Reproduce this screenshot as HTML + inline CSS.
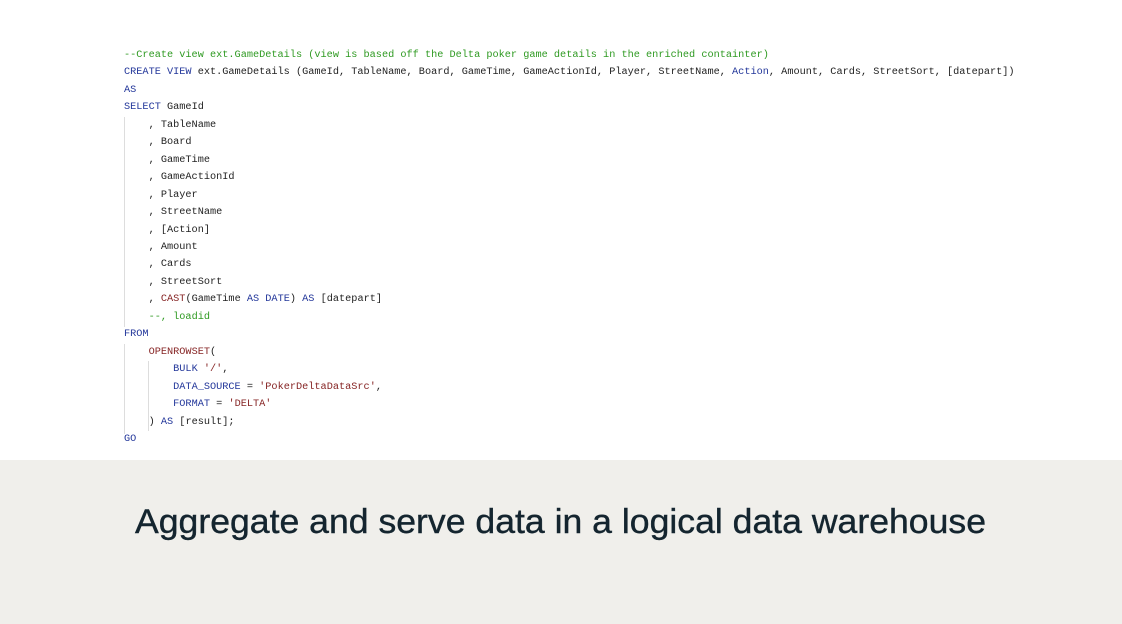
<!DOCTYPE html>
<html><head><meta charset="utf-8"><style>
html,body{margin:0;padding:0;width:1122px;height:624px;overflow:hidden;background:#fff;}
.top{position:absolute;left:0;top:0;width:1122px;height:460px;background:#fff;}
.bot{position:absolute;left:0;top:460px;width:1122px;height:164px;background:#f0efeb;}
pre{position:absolute;left:124px;top:47px;margin:0;font-family:"Liberation Mono",monospace;font-size:10.24px;line-height:17.45px;color:#222;transform:scaleY(1.1);transform-origin:0 0;}
.k{color:#22369a}.c{color:#2f9a22}.s{color:#862424}.f{color:#862424}
.g1{position:absolute;left:124px;top:117px;width:1px;height:210px;background:#ddd}
.g2{position:absolute;left:148px;top:361px;width:1px;height:70px;background:#ddd}
.g3{position:absolute;left:124px;top:344px;width:1px;height:90px;background:#ddd}
</style></head><body>
<div class="top"></div>
<div class="g1"></div><div class="g3"></div><div class="g2"></div>
<pre style="transform:none"><span class="c">--Create view ext.GameDetails (view is based off the Delta poker game details in the enriched containter)</span>
<span class="k">CREATE VIEW</span> ext.GameDetails (GameId, TableName, Board, GameTime, GameActionId, Player, StreetName, <span class="k">Action</span>, Amount, Cards, StreetSort, [datepart])
<span class="k">AS</span>
<span class="k">SELECT</span> GameId
    , TableName
    , Board
    , GameTime
    , GameActionId
    , Player
    , StreetName
    , [Action]
    , Amount
    , Cards
    , StreetSort
    , <span class="f">CAST</span>(GameTime <span class="k">AS DATE</span>) <span class="k">AS</span> [datepart]
    <span class="c">--, loadid</span>
<span class="k">FROM</span>
    <span class="f">OPENROWSET</span>(
        <span class="k">BULK</span> <span class="s">'/'</span>,
        <span class="k">DATA_SOURCE</span> = <span class="s">'PokerDeltaDataSrc'</span>,
        <span class="k">FORMAT</span> = <span class="s">'DELTA'</span>
    ) <span class="k">AS</span> [result];
<span class="k">GO</span></pre>
<div class="bot"></div>
<svg style="position:absolute;left:0;top:0" width="1122" height="624">
<text x="135" y="533" font-family="Liberation Sans, sans-serif" font-size="34" fill="#14252f" stroke="#14252f" stroke-width="0.4" textLength="851" lengthAdjust="spacingAndGlyphs">Aggregate and serve data in a logical data warehouse</text>
</svg>
</body></html>
